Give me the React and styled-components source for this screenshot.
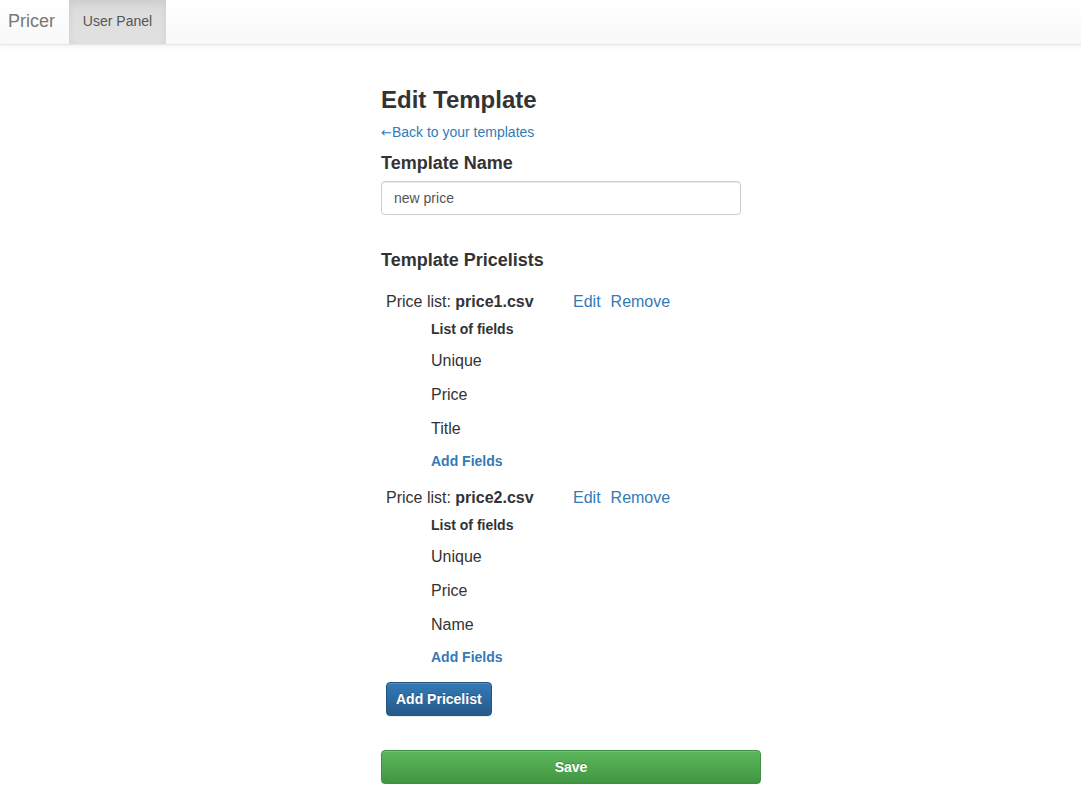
import React, { useState } from "react"
import styled, { createGlobalStyle } from "styled-components"

const GlobalStyle = createGlobalStyle`
    html, body {
        margin: 0;
        padding: 0;
        background: #fff;
    }

    body {
        font-family: "Liberation Sans", Arial, sans-serif;
        font-size: 14px;
        line-height: 1.42857;
        color: #333;
    }

    * {
        box-sizing: border-box;
    }
`

const pricelists = [
    { file: 'price1.csv', fields: ['Unique', 'Price', 'Title'] },
    { file: 'price2.csv', fields: ['Unique', 'Price', 'Name'] },
]

const App = () => {
    const [templateName, setTemplateName] = useState('new price')

    return (
        <>
            <GlobalStyle />
            <Navbar>
                <Brand href="#">Pricer</Brand>
                <NavItem href="#" $active>User Panel</NavItem>
            </Navbar>

            <Content>
                <PageTitle>Edit Template</PageTitle>
                <Link href="#"><Arrow>&larr;</Arrow>Back to your templates</Link>

                <SectionTitle $bottom={8}>Template Name</SectionTitle>
                <TextInput
                    type="text"
                    value={templateName}
                    onChange={(e) => setTemplateName(e.target.value)}
                />

                <SectionTitle $top={35}>Template Pricelists</SectionTitle>

                <Pricelists>
                    {pricelists.map((list) => (
                        <PricelistBlock key={list.file}>
                            <PricelistHeader>
                                <PricelistName>
                                    Price list: <b>{list.file}</b>
                                </PricelistName>
                                <Link href="#" $size={16}>Edit</Link>
                                <Link href="#" $size={16}>Remove</Link>
                            </PricelistHeader>

                            <Fields>
                                <FieldsTitle>List of fields</FieldsTitle>
                                {list.fields.map((field) => (
                                    <FieldItem key={field}>{field}</FieldItem>
                                ))}
                                <AddFieldsLink href="#">Add Fields</AddFieldsLink>
                            </Fields>
                        </PricelistBlock>
                    ))}

                    <Button $variant="primary">Add Pricelist</Button>
                </Pricelists>

                <Button $variant="success" $block>Save</Button>
            </Content>
        </>
    )
}

const Navbar = styled.nav`
    display: flex;
    height: 45px;
    background-image: linear-gradient(to bottom, #fff 0, #f8f8f8 100%);
    border-bottom: 1px solid #e7e7e7;
    box-shadow: inset 0 1px 0 rgba(255, 255, 255, 0.15), 0 1px 5px rgba(0, 0, 0, 0.075);
`

const Brand = styled.a`
    display: flex;
    align-items: center;
    width: 69px;
    padding-left: 8px;
    font-size: 18px;
    color: #777;
    text-decoration: none;
`

const NavItem = styled.a`
    display: flex;
    align-items: center;
    justify-content: center;
    width: 97px;
    font-size: 14px;
    color: #555;
    text-decoration: none;
    background-image: ${({ $active }) => $active ? 'linear-gradient(to bottom, #dbdbdb 0, #e2e2e2 100%)' : 'none'};
    box-shadow: ${({ $active }) => $active ? 'inset 0 3px 9px rgba(0, 0, 0, 0.075)' : 'none'};
`

const Content = styled.main`
    display: flex;
    flex-direction: column;
    align-items: flex-start;
    width: 380px;
    margin-left: 381px;
    padding-top: 42px;
`

const PageTitle = styled.h3`
    margin: 0 0 9px;
    font-size: 24px;
    font-weight: 700;
    line-height: 26px;
    color: #333;
`

const Link = styled.a`
    font-size: ${({ $size }) => $size || 14}px;
    line-height: ${({ $size }) => $size ? 24 : 20}px;
    color: #337ab7;
    text-decoration: none;
    cursor: pointer;

    &:hover {
        text-decoration: underline;
    }
`

const Arrow = styled.span`
    font-family: "DejaVu Sans", sans-serif;
    font-size: 13px;
`

const SectionTitle = styled.h4`
    margin: ${({ $top }) => $top || 10}px 0 ${({ $bottom }) => $bottom || 10}px;
    font-size: 18px;
    font-weight: 700;
    line-height: 20px;
    color: #333;
`

const TextInput = styled.input`
    width: 360px;
    height: 34px;
    padding: 6px 12px;
    font-family: inherit;
    font-size: 14px;
    color: #555;
    background: #fff;
    border: 1px solid #ccc;
    border-radius: 4px;
    box-shadow: inset 0 1px 1px rgba(0, 0, 0, 0.075);
    outline: 0;
`

const Pricelists = styled.div`
    display: flex;
    flex-direction: column;
    align-items: flex-start;
    padding-left: 5px;
    margin-top: 10px;
    margin-bottom: 34px;
`

const PricelistBlock = styled.div`
    display: flex;
    flex-direction: column;
    margin-bottom: 15px;
`

const PricelistHeader = styled.div`
    display: flex;
    align-items: center;
    gap: 10px;
    height: 24px;
    font-size: 16px;
`

const PricelistName = styled.span`
    width: 177px;
    line-height: 24px;
    color: #333;
`

const Fields = styled.div`
    display: flex;
    flex-direction: column;
    align-items: flex-start;
    padding-left: 45px;
    padding-top: 5px;
`

const FieldsTitle = styled.div`
    font-size: 14px;
    font-weight: 700;
    line-height: 20px;
    margin-bottom: 5px;
`

const FieldItem = styled.div`
    font-size: 16px;
    line-height: 34px;
`

const AddFieldsLink = styled(Link)`
    margin-top: 5px;
    font-weight: 700;
`

const Button = styled.button`
    display: block;
    width: ${({ $block }) => $block ? '100%' : 'auto'};
    height: 34px;
    padding: 6px ${({ $block }) => $block ? 12 : 9}px;
    font-family: inherit;
    font-size: 14px;
    font-weight: 700;
    line-height: 20px;
    color: #fff;
    border-radius: 4px;
    cursor: pointer;
    text-shadow: 0 -1px 0 rgba(0, 0, 0, 0.2);
    box-shadow: inset 0 1px 0 rgba(255, 255, 255, 0.15), 0 1px 1px rgba(0, 0, 0, 0.075);
    border: 1px solid ${({ $variant }) => $variant === 'success' ? '#3e8f3e' : '#245580'};
    background-image: ${({ $variant }) => $variant === 'success'
        ? 'linear-gradient(to bottom, #5cb85c 0, #419641 100%)'
        : 'linear-gradient(to bottom, #337ab7 0, #265a88 100%)'};
`

export default App
